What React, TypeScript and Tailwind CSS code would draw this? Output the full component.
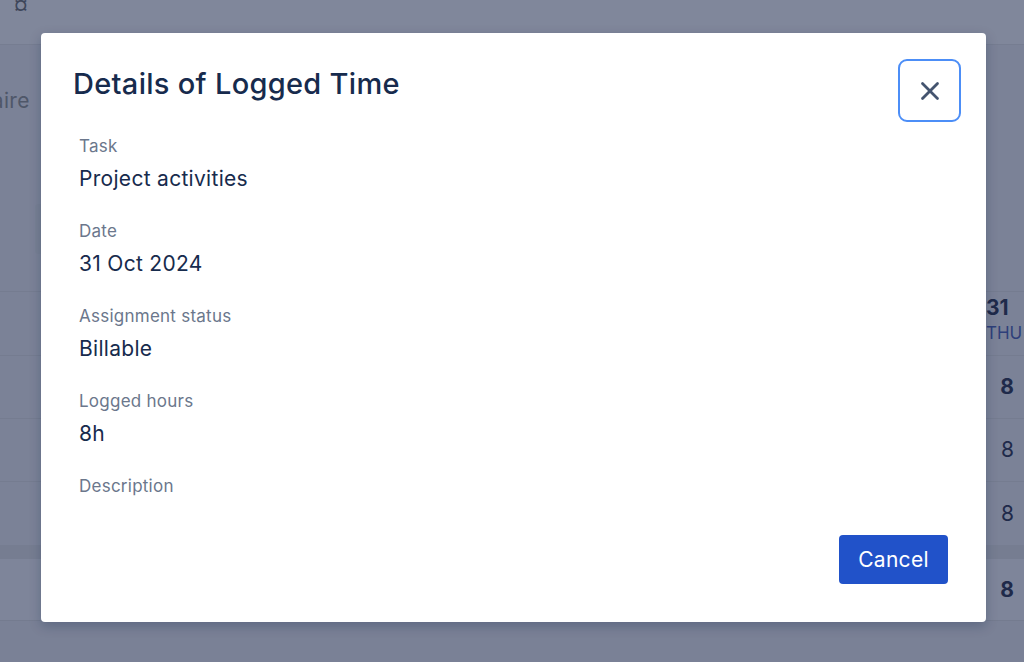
import { X } from "lucide-react";

type Field = { label: string; value: string };

const fields: Field[] = [
  { label: "Task", value: "Project activities" },
  { label: "Date", value: "31 Oct 2024" },
  { label: "Assignment status", value: "Billable" },
  { label: "Logged hours", value: "8h" },
  { label: "Description", value: "" },
];

// rows of the timesheet behind the dimmed overlay
const rows = [
  { h: "h-[63px]", value: "8", bold: true },
  { h: "h-[63px]", value: "8", bold: false },
  { h: "h-[64px]", value: "8", bold: false },
];

function BackgroundPage() {
  return (
    <div className="flex flex-col w-full h-full">
      <div className="h-[45px] bg-[#80879b] border-b border-[#767d91] flex items-start pl-[14px]">
        <span className="text-[18px] leading-[10px] font-bold text-[#3e465a]">¤</span>
      </div>
      <div className="h-[246px] flex flex-col">
        <div className="pt-[42px] -ml-[112px] text-[21px] leading-[28px] tracking-[0.3px] text-[#4f5769]">Questionnaire</div>
        <div className="mt-[89px] ml-[35px] w-[40px] h-[50px] rounded-[4px] bg-[#788094]" />
      </div>
      <div className="h-[64px] border-t border-[#757c90] flex justify-end">
        <div className="w-[38px] flex flex-col items-start pt-[4px]">
          <span className="text-[21px] leading-[24px] font-bold text-[#1f2a4a]">31</span>
          <span className="mt-[2px] text-[17px] leading-[22px] text-[#2e3f7a]">THU</span>
        </div>
      </div>
      {rows.map((r, i) => (
        <div key={i} className={`${r.h} border-t border-[#757c90] flex justify-end items-center pr-[10px]`}>
          <span className={`text-[21px] text-[#1f2a4a] ${r.bold ? "font-bold" : ""}`}>{r.value}</span>
        </div>
      ))}
      <div className="h-[14px] bg-[#767d91]" />
      <div className="h-[61px] bg-[#7e859a] flex justify-end items-center pr-[10px]">
        <span className="text-[21px] font-bold text-[#1f2a4a]">8</span>
      </div>
      <div className="flex-1 bg-[#7a8196] border-t border-[#747b8f]" />
    </div>
  );
}

export default function App() {
  return (
    <div
      className="relative w-[1024px] h-[662px] overflow-hidden bg-[#7b8297]"
      style={{ fontFamily: "Inter, 'Noto Sans', sans-serif" }}
    >
      <BackgroundPage />
      <div className="absolute left-[41px] top-[33px] w-[945px] h-[589px] bg-white rounded-[4px] shadow-[0_4px_12px_rgba(9,30,66,0.25)] flex flex-col">
        <div className="flex justify-between items-start pl-[32px] pr-[25px] pt-[26px]">
          <h1 className="mt-[7px] text-[29px] leading-[36px] font-medium tracking-[0.3px] text-[#172b4d]">
            Details of Logged Time
          </h1>
          <button className="w-[63px] h-[63px] rounded-[9px] border-[2px] border-[#4c8ef7] flex items-center justify-center text-[#44546f]">
            <X size={30} strokeWidth={2.2} />
          </button>
        </div>
        <div className="mt-[14px] pl-[38px] flex flex-col gap-[28px]">
          {fields.map((f) => (
            <div key={f.label} className="flex flex-col gap-[9px]">
              <span className="text-[17px] leading-[20px] tracking-[0.25px] text-[#6b778c]">{f.label}</span>
              {f.value ? (
                <span className="text-[21px] leading-[28px] tracking-[0.3px] text-[#172b4d]">{f.value}</span>
              ) : null}
            </div>
          ))}
        </div>
        <div className="mt-auto flex justify-end pr-[38px] pb-[38px]">
          <button className="w-[109px] h-[49px] rounded-[4px] bg-[#2152c9] text-white text-[21px] leading-[24px] tracking-[0.3px]">
            Cancel
          </button>
        </div>
      </div>
    </div>
  );
}
